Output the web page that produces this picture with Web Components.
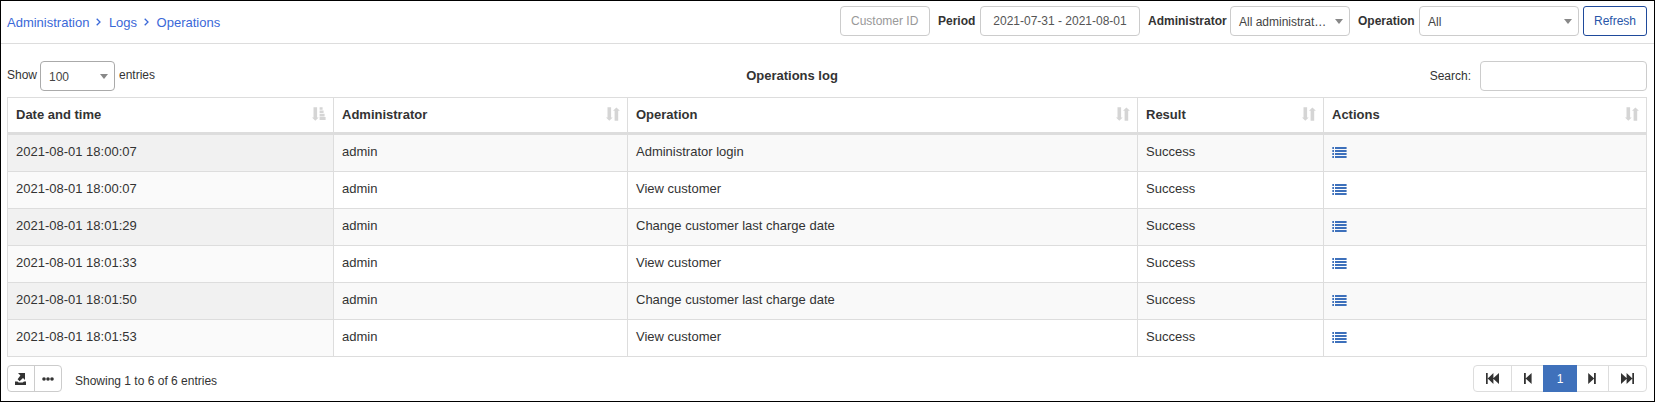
<!DOCTYPE html>
<html lang="en">
<head>
<meta charset="utf-8">
<title>Operations log</title>
<style>
html,body{margin:0;height:100%}
body{font:13px/18px "Liberation Sans",Arial,sans-serif;color:#333;background:#fff}
</style>
</head>
<body>
<log-page></log-page>
<script>
function define(name, render){
  customElements.define(name, class extends HTMLElement{
    constructor(){super();this.attachShadow({mode:'open'});}
    connectedCallback(){this.shadowRoot.innerHTML=render(this);}
  });
}
const base='*{box-sizing:border-box}';
const shapes={
  sort:[14,14,'<path d="M1.5 .3h3.6v10.2h1.6L3.3 13.8 0 10.5h1.5zM8.6 13.8h3.6V3.8h1.7L10.4.4 7 3.8h1.6z"/>'],
  asc:[14,14,'<path d="M1.5 .3h3.6v10.2h1.6L3.3 13.8 0 10.5h1.5zM7.6 .2h3v2.6h-3zM7.6 3.5h4v2.6h-4zM7.6 6.8h5v2.6h-5zM7.6 10.1h6v2.8h-6z"/>'],
  list:[15,11,'<path d="M.3 0H2v2H.3zM3 0h11.6v2H3zM.3 3H2v2H.3zM3 3h11.6v2H3zM.3 6H2v2H.3zM3 6h11.6v2H3zM.3 9H2v2H.3zM3 9h11.6v2H3z"/>'],
  chevron:[5,8,'<path d="M.7.7 4 4 .7 7.3" fill="none" stroke="currentColor" stroke-width="1.3"/>'],
  caret:[8,5,'<path d="M0 0h8L4 5z"/>'],
  export:[11,12,'<path d="M3 0h7v7L8 5 4.6 8.2 2.6 6.2 5.4 2.6zM0 8.4h2.4l1.3 1h4l1.3-1h2V12H0z"/>'],
  dots:[12,4,'<circle cx="2" cy="2" r="1.8"/><circle cx="6" cy="2" r="1.8"/><circle cx="10" cy="2" r="1.8"/>'],
  first:[13,11,'<path d="M0 0h1.7v11H0zM7.4 0v11L1.7 5.5zM13 0v11L7 5.5z"/>'],
  prev:[8,11,'<path d="M0 0h1.8v11H0zM7.6 0v11L1.6 5.5z"/>'],
  next:[8,11,'<path d="M6 0h1.8v11H6zM.2 0v11l6-5.5z"/>'],
  last:[13,11,'<path d="M11.3 0H13v11h-1.7zM5.6 0v11l5.8-5.5zM0 0v11l6-5.5z"/>']
};
define('ui-icon',e=>{const [w,h,s]=shapes[e.getAttribute('name')];
  return `<style>:host{display:block;flex:none;width:${w}px;height:${h}px}svg{display:block}</style><svg width="${w}" height="${h}" viewBox="0 0 ${w} ${h}" fill="currentColor">${s}</svg>`;});
define('ui-box',()=>`<style>${base}
:host{box-sizing:border-box;display:flex;align-items:center;height:30px;width:var(--w);border:1px solid #ccc;border-radius:4px;background:#fff;font-size:12px;padding:0 0 1px 10px;white-space:nowrap;color:#555}
:host([center]){justify-content:center;padding-left:0}
:host([primary]){color:#2855a8;border-color:#1f4a9b;border-radius:3px}
:host([hint]){color:#999}
</style><slot></slot>`);
define('ui-select',()=>`<style>${base}
:host{box-sizing:border-box;display:flex;align-items:center;justify-content:space-between;height:30px;width:var(--w);border:1px solid var(--line,#ccc);border-radius:4px;background:#fff;font-size:12px;padding:1px 6px 0 8px;color:#444;white-space:nowrap}
ui-icon{color:#888}
</style><span><slot></slot></span><ui-icon name="caret"></ui-icon>`);
define('bread-crumbs',()=>`<style>
:host{display:flex;align-items:center;color:#3a68d8;font-size:13px;padding-top:3px}
ui-icon{margin:0 7.5px 2px 7px}
</style><span>Administration</span><ui-icon name="chevron"></ui-icon><span>Logs</span><ui-icon name="chevron"></ui-icon><span>Operations</span>`);
define('top-bar',()=>`<style>${base}
:host{box-sizing:border-box;display:flex;justify-content:space-between;height:43px;padding:5px 7px 7px 6px;border-bottom:1px solid #ddd}
.f{display:flex;align-items:center;font-size:12px}
b{white-space:nowrap;padding-bottom:1px}
</style><bread-crumbs></bread-crumbs><div class="f">
<ui-box hint style="--w:90px">Customer ID</ui-box>
<b style="margin-left:8px;width:42px">Period</b><ui-box center style="--w:160px">2021-07-31 - 2021-08-01</ui-box>
<b style="margin-left:8px;width:82px">Administrator</b><ui-select style="--w:120px">All administrat…</ui-select>
<b style="margin-left:8px;width:61px">Operation</b><ui-select style="--w:160px">All</ui-select>
<ui-box center primary style="--w:64px;margin-left:4px">Refresh</ui-box></div>`);
define('table-tools',()=>`<style>${base}
:host{display:grid;grid-template-columns:1fr auto 1fr;margin:17px 7px 0 6px;height:36px;align-items:start;font-size:12px}
div{display:flex;align-items:center;height:30px}
.r{justify-content:flex-end}
b{font-size:13px;margin:0 70px 0 0}
.s{padding-bottom:3px}
</style><div><span class="s" style="width:33px">Show</span><ui-select style="--w:75px;--line:#aaa">100</ui-select><span class="s" style="margin-left:4px">entries</span></div>
<div><b>Operations log</b></div>
<div class="r"><span style="margin-right:9px;padding-bottom:1px">Search:</span><ui-box style="--w:167px"></ui-box></div>`);
define('log-cell',()=>`<style>${base}
:host{box-sizing:border-box;display:flex;align-items:center;padding:0 7px 2px 8px;border-right:1px solid #ddd;background:var(--bg);white-space:nowrap}
:host(:first-of-type){border-left:1px solid #ddd;background:var(--bg1)}
::slotted(ui-icon){color:#3d70bb;margin-top:1px}
</style><span><slot></slot></span>`);
define('head-cell',e=>`<style>${base}
:host{box-sizing:border-box;display:flex;align-items:center;justify-content:space-between;padding:0 7px 0 8px;border-right:1px solid #ddd;font-weight:700}
:host(:first-of-type){border-left:1px solid #ddd}
ui-icon{color:#d5d5d5;margin-bottom:2px}
</style><span><slot></slot></span><ui-icon name="${e.getAttribute('sort')||'sort'}"></ui-icon>`);
define('log-row',e=>`<style>${base}
:host{box-sizing:border-box;display:grid;grid-template-columns:327px 294px 510px 186px 323px;height:37px;border-bottom:1px solid #ddd;--bg:#fff;--bg1:#fafafa}
:host([odd]){--bg:#f9f9f9;--bg1:#f1f1f1}
</style><log-cell>2021-08-01 ${e.getAttribute('time')}</log-cell><log-cell>admin</log-cell><log-cell>${e.getAttribute('op')}</log-cell><log-cell>Success</log-cell><log-cell><ui-icon name="list"></ui-icon></log-cell>`);
define('log-table',()=>`<style>${base}
:host{display:block;margin:0 7px 0 6px}
.h{display:grid;grid-template-columns:327px 294px 510px 186px 323px;height:38px;border-top:1px solid #ddd;border-bottom:3px solid #ddd}
</style><div class="h"><head-cell sort="asc">Date and time</head-cell><head-cell>Administrator</head-cell><head-cell>Operation</head-cell><head-cell>Result</head-cell><head-cell>Actions</head-cell></div>`+
[['18:00:07','Administrator login'],['18:00:07','View customer'],['18:01:29','Change customer last charge date'],['18:01:33','View customer'],['18:01:50','Change customer last charge date'],['18:01:53','View customer']]
.map(([t,o],i)=>`<log-row ${i%2?'':'odd'} time="${t}" op="${o}"></log-row>`).join(''));
define('button-group',()=>`<style>
:host{box-sizing:border-box;display:flex;height:27px;border:1px solid var(--line,#ccc);border-radius:4px}
::slotted(span){display:flex;align-items:center;justify-content:center;box-sizing:border-box;border-right:1px solid var(--line,#ccc)}
::slotted(span:last-child){border-right:0}
::slotted(.on){background:#3f71bb;color:#fff;margin:-1px 0;border-right:0}
</style><slot></slot>`);
define('table-footer',()=>`<style>${base}
:host{display:flex;justify-content:space-between;margin:8px 7px 0 6px;font-size:12px}
.l{display:flex}
p{margin:7px 0 0 13px}
</style><div class="l"><button-group><span style="width:27px;padding-right:1px"><ui-icon name="export"></ui-icon></span><span style="width:26px"><ui-icon name="dots"></ui-icon></span></button-group><p>Showing 1 to 6 of 6 entries</p></div>
<button-group style="--line:#ddd"><span style="width:38px"><ui-icon name="first"></ui-icon></span><span style="width:31px;border-right:0"><ui-icon name="prev"></ui-icon></span><span class="on" style="width:34px">1</span><span style="width:32px;padding-right:2px"><ui-icon name="next"></ui-icon></span><span style="width:37px"><ui-icon name="last"></ui-icon></span></button-group>`);
define('log-page',()=>`<style>${base}
:host{box-sizing:border-box;display:block;width:1655px;height:402px;border:1px solid #000;overflow:hidden}
</style><top-bar></top-bar><table-tools></table-tools><log-table></log-table><table-footer></table-footer>`);
</script>
</body>
</html>
